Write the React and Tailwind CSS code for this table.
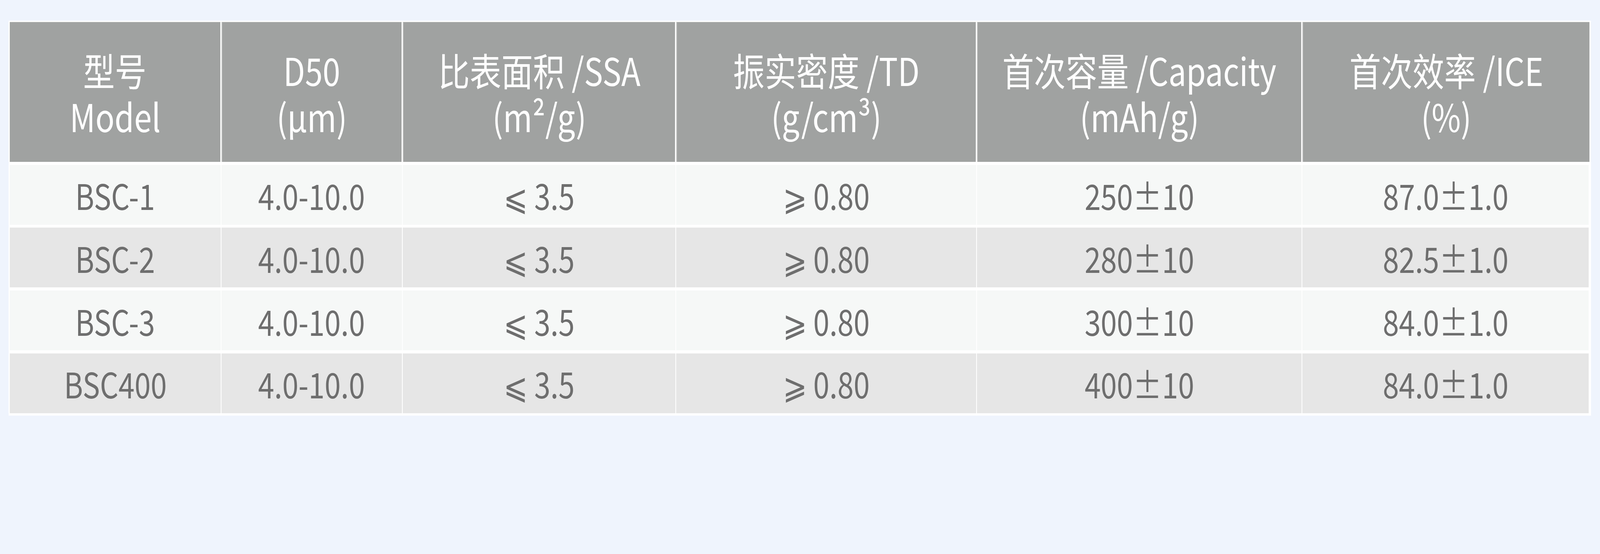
import React from "react";

const headers = [
  ["型号", "Model"],
  ["D50", "(μm)"],
  ["比表面积 /SSA", "(m²/g)"],
  ["振实密度 /TD", "(g/cm³)"],
  ["首次容量 /Capacity", "(mAh/g)"],
  ["首次效率 /ICE", "(%)"],
];

const headerEdges = [
  "border-r-[1px] border-r-white",
  "border-l-[2px] border-l-[#c9cac9] border-r-[1px] border-r-white",
  "border-l-[2px] border-l-[#c9cac9] border-r-[1px] border-r-white",
  "border-l-[2px] border-l-[#c9cac9] border-r-[1px] border-r-white",
  "border-l-[2px] border-l-[#c9cac9] border-r-[1px] border-r-white",
  "border-l-[2px] border-l-[#c9cac9] -mr-[2px]",
];

const rows = [
  ["BSC-1", "4.0-10.0", "⩽ 3.5", "⩾ 0.80", "250±10", "87.0±1.0"],
  ["BSC-2", "4.0-10.0", "⩽ 3.5", "⩾ 0.80", "280±10", "82.5±1.0"],
  ["BSC-3", "4.0-10.0", "⩽ 3.5", "⩾ 0.80", "300±10", "84.0±1.0"],
  ["BSC400", "4.0-10.0", "⩽ 3.5", "⩾ 0.80", "400±10", "84.0±1.0"],
];

export default function App() {
  return (
    <div
      className="w-full min-h-screen bg-[#eff4fd] pt-[53px] pl-[22px]"
      style={{ fontFamily: '"Noto Sans CJK SC", "Noto Sans", sans-serif' }}
    >
      <div className="w-[4051px] bg-white pt-[3px] pl-[3px] pr-[6px] pb-[6px]">
        <div className="grid grid-cols-[540px_462px_698px_768px_831px_733px] gap-x-[2px] gap-y-[7.7px]">
          {headers.map((h, i) => (
            <div
              key={"h" + i}
              className={
                "h-[358px] bg-[#a0a2a1] border-t border-t-[#c4c5c4] flex flex-col items-center justify-center text-white text-[98px] leading-[118px] text-center whitespace-nowrap " +
                headerEdges[i]
              }
            >
              <div className="scale-x-[0.8256]">{h[0]}</div>
              <div className="scale-x-[0.8256]">{h[1]}</div>
            </div>
          ))}
          {rows.map((r, ri) =>
            r.map((c, ci) => (
              <div
                key={ri + "-" + ci}
                className={
                  "h-[153px] flex items-center justify-center text-[90px] leading-[100px] text-[#6e6e6e] whitespace-nowrap " +
                  (ri % 2 === 0 ? "bg-[#f6f8f7]" : "bg-[#e6e6e6]")
                }
              >
                <div className="scale-x-[0.8256]">{c}</div>
              </div>
            ))
          )}
        </div>
      </div>
    </div>
  );
}
